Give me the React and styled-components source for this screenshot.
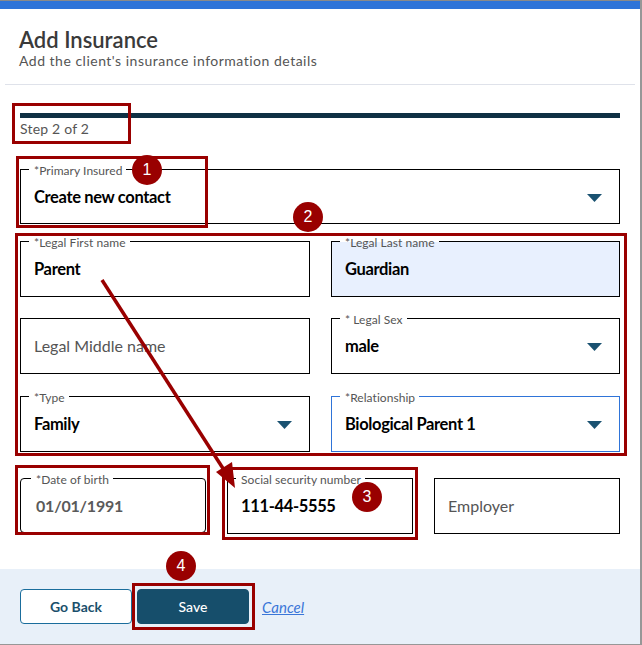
import React from 'react';
import styled, { createGlobalStyle } from 'styled-components';

const Global = createGlobalStyle`
  html, body { margin: 0; padding: 0; background: #fff; }
  * { box-sizing: border-box; }
`

const Chevron = () => (
  <Caret width="15" height="8" viewBox="0 0 15 8">
    <path d="M0 0h15L7.5 8z" fill="#1a5271" />
  </Caret>
)

const Field = ({ label, value, placeholder, select, ...rest }) => (
  <Box {...rest}>
    {label && <Legend $rounded={rest.$rounded}>{label}</Legend>}
    {placeholder ? <Placeholder>{placeholder}</Placeholder> : <Value $muted={rest.$rounded}>{value}</Value>}
    {select && <Chevron />}
  </Box>
)

const App = () => {
  return (
    <Page>
      <Global />
      <TopStrip />
      <Header>
        <Title>Add Insurance</Title>
        <Subtitle>Add the client's insurance information details</Subtitle>
      </Header>
      <Form>
        <Progress />
        <StepText>Step 2 of 2</StepText>
        <Stack>
          <Field label="*Primary Insured" value="Create new contact" select $h={55} />
          <TwoCol>
            <Field label="*Legal First name" value="Parent" />
            <Field label="*Legal Last name" value="Guardian" $fill="#e8f0fe" />
            <Field placeholder="Legal Middle name" />
            <Field label="* Legal Sex" value="male" select />
            <Field label="*Type" value="Family" select />
            <Field label="*Relationship" value="Biological Parent 1" select $line="#2f74d8" />
          </TwoCol>
          <ThreeCol>
            <Field label="*Date of birth" value="01/01/1991" $rounded $h={55} />
            <Field label="Social security number" value="111-44-5555" />
            <Field placeholder="Employer" />
          </ThreeCol>
        </Stack>
      </Form>
      <Footer>
        <GhostButton>Go Back</GhostButton>
        <SaveButton>Save</SaveButton>
        <CancelLink>Cancel</CancelLink>
      </Footer>

      <ScrollThumb />
      <Mark $x={12} $y={103} $w={119} $h={41} />
      <Mark $x={16} $y={156} $w={192} $h={72} />
      <Mark $x={15} $y={233} $w={612} $h={223} />
      <Mark $x={15} $y={465} $w={195} $h={70} />
      <Mark $x={222} $y={467} $w={196} $h={73} />
      <Mark $x={132} $y={583} $w={123} $h={47} />
      <Badge $x={147} $y={170}>1</Badge>
      <Badge $x={308} $y={217}>2</Badge>
      <Badge $x={367} $y={497}>3</Badge>
      <Badge $x={181} $y={566}>4</Badge>
      <Arrow width="642" height="645" viewBox="0 0 642 645">
        <path d="M102 280L224 470" stroke="#990000" strokeWidth="3.5" fill="none" />
        <path d="M235 488L216 472L232 462z" fill="#990000" />
      </Arrow>
    </Page>
  )
}

const Page = styled.div`
  position: relative;
  display: flex;
  flex-direction: column;
  width: 642px;
  height: 645px;
  overflow: hidden;
  background: #fff;
  border-right: 2px solid #979797;
  border-bottom: 1px solid #979797;
  font-family: Lato, "Liberation Sans", sans-serif;
`
const TopStrip = styled.div`
  height: 9px;
  flex: none;
  background: #2f74d8;
  border-top: 1px solid #8a8a8a;
`
const ScrollThumb = styled.div`
  position: absolute;
  right: -2px;
  top: 128px;
  width: 2px;
  height: 48px;
  background: #3f6a8a;
`
const Header = styled.header`
  height: 76px;
  flex: none;
  margin: 0 5px;
  padding: 18px 0 0 14px;
  border-bottom: 1px solid #dfe2ea;
`
const Title = styled.h1`
  margin: 0;
  font-size: 22px;
  line-height: 26px;
  font-weight: 600;
  color: #3a3a3a;
`
const Subtitle = styled.p`
  margin: 0;
  font-size: 14px;
  line-height: 16px;
  letter-spacing: 0.5px;
  color: #555;
`
const Form = styled.div`
  flex: 1;
  padding: 28px 20px 0;
`
const Progress = styled.div`
  height: 5px;
  background: #0f3044;
`
const StepText = styled.div`
  margin-top: 3px;
  font-size: 14px;
  line-height: 16px;
  letter-spacing: 0.2px;
  color: #555;
`
const Stack = styled.div`
  display: flex;
  flex-direction: column;
  gap: 17px;
  margin-top: 32px;
`
const TwoCol = styled.div`
  display: grid;
  grid-template-columns: 290px 289px;
  grid-template-rows: 56px 57px 56px;
  justify-content: space-between;
  row-gap: 21px;
`
const ThreeCol = styled.div`
  display: grid;
  grid-template-columns: repeat(3, 186px);
  justify-content: space-between;
  margin-top: 9px;
`
const Box = styled.div`
  position: relative;
  display: flex;
  align-items: center;
  height: ${p => p.$h || 56}px;
  padding: 0 ${p => (p.$rounded ? 15 : 13)}px 2px;
  border: 1px solid ${p => p.$line || '#000'};
  border-radius: ${p => (p.$rounded ? '4px' : '0')};
  background: ${p => p.$fill || 'transparent'};
`
const Legend = styled.span`
  position: absolute;
  top: -5px;
  left: ${p => (p.$rounded ? 10 : 8)}px;
  padding: 0 4px 0 5px;
  font-size: 12px;
  line-height: 12px;
  letter-spacing: 0.05px;
  color: #555;
  background: linear-gradient(#fff 5px, transparent 5px);
`
const Value = styled.span`
  padding-top: 2px;
  font-size: ${p => (p.$muted ? 16 : 16.5)}px;
  font-weight: 700;
  letter-spacing: ${p => (p.$muted ? -0.2 : -0.35)}px;
  color: ${p => (p.$muted ? '#5a5a5a' : '#000')};
`
const Placeholder = styled.span`
  font-size: 16px;
  color: #555;
`
const Caret = styled.svg`
  position: absolute;
  right: 17px;
  top: 24px;
`
const Footer = styled.footer`
  display: flex;
  align-items: center;
  height: 75px;
  flex: none;
  padding: 0 20px;
  background: #e8f0f9;
`
const GhostButton = styled.button`
  width: 112px;
  height: 35px;
  border: 1px solid #1a6d9c;
  border-radius: 4px;
  background: #fff;
  color: #1a4f6b;
  font: 700 14px Lato, "Liberation Sans", sans-serif;
`
const SaveButton = styled(GhostButton)`
  margin-left: 5px;
  border-color: #164e6b;
  background: #164e6b;
  color: #fff;
  font-weight: 500;
`
const CancelLink = styled.a`
  margin-left: 13px;
  font-size: 15px;
  font-style: italic;
  color: #3a76d8;
  text-decoration: underline;
`
const Mark = styled.div`
  position: absolute;
  left: ${p => p.$x}px;
  top: ${p => p.$y}px;
  width: ${p => p.$w}px;
  height: ${p => p.$h}px;
  border: 3px solid #990000;
  pointer-events: none;
`
const Badge = styled.div`
  position: absolute;
  left: ${p => p.$x - 15}px;
  top: ${p => p.$y - 15}px;
  display: flex;
  align-items: center;
  justify-content: center;
  width: 30px;
  height: 30px;
  border-radius: 50%;
  background: #990000;
  color: #fff;
  font: 16px "Liberation Sans", sans-serif;
`
const Arrow = styled.svg`
  position: absolute;
  left: 0;
  top: 0;
  pointer-events: none;
`

export default App;
